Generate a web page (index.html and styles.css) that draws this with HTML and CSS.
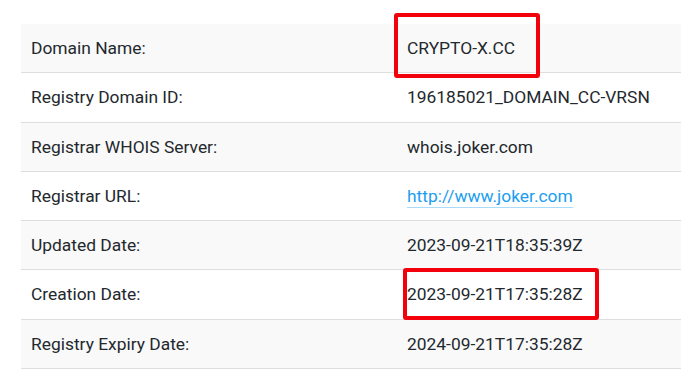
FILE: index.html
```html
<!DOCTYPE html>
<html>
<head>
<meta charset="utf-8">
<link rel="stylesheet" href="styles.css">
</head>
<body>
<div class="wrap">
  <table class="whois">
    <tr><td class="k">Domain Name:</td><td class="v">CRYPTO-X.CC</td></tr>
    <tr><td class="k">Registry Domain ID:</td><td class="v">196185021_DOMAIN_CC-VRSN</td></tr>
    <tr><td class="k">Registrar WHOIS Server:</td><td class="v">whois.joker.com</td></tr>
    <tr><td class="k">Registrar URL:</td><td class="v"><a class="link" href="#">http://www.joker.com</a></td></tr>
    <tr><td class="k">Updated Date:</td><td class="v">2023-09-21T18:35:39Z</td></tr>
    <tr><td class="k">Creation Date:</td><td class="v">2023-09-21T17:35:28Z</td></tr>
    <tr><td class="k">Registry Expiry Date:</td><td class="v">2024-09-21T17:35:28Z</td></tr>
  </table>
  <div class="mark mark-domain"></div>
  <div class="mark mark-created"></div>
</div>
</body>
</html>
```

FILE: styles.css
```css
html, body {
  margin: 0;
  padding: 0;
  background: #fff;
}
body {
  font-family: Roboto, "Liberation Sans", sans-serif;
  font-size: 17.4px;
  color: #23282d;
  overflow: hidden;
}
.wrap {
  position: relative;
  padding: 24px 0 0 21px;
}
.whois {
  width: 660px;
  border-collapse: collapse;
}
.whois td {
  padding: 14px 10px;
  line-height: 20.3px;
  border-bottom: 1px solid #dedede;
  text-align: left;
  vertical-align: middle;
  white-space: nowrap;
}
.whois tr:nth-child(odd) td {
  background: #f9f9f9;
}
.whois .k {
  width: 356px;
}
.link {
  color: #1b9ef0;
  text-decoration: none;
  border-bottom: 1px solid #a9dcfa;
  padding-bottom: 1px;
}
.mark {
  position: absolute;
  border: 4px solid #f2000c;
  border-radius: 3px;
  box-sizing: border-box;
}
.mark-domain {
  left: 394px;
  top: 13px;
  width: 146px;
  height: 65px;
}
.mark-created {
  left: 403px;
  top: 268px;
  width: 196px;
  height: 52px;
}
```
